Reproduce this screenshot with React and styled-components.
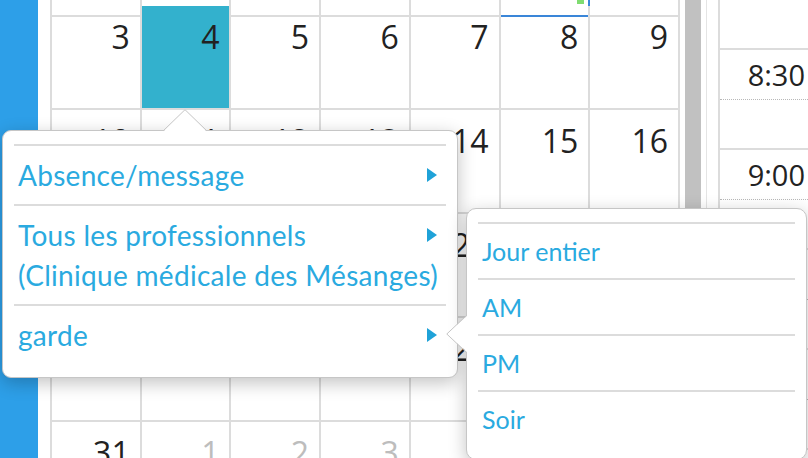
import React from "react";
import styled, { createGlobalStyle } from "styled-components";

const GlobalStyle = createGlobalStyle`
  html, body {
    margin: 0;
    padding: 0;
    background: #fff;
    overflow: hidden;
  }
  * {
    box-sizing: border-box;
  }
`;

const Page = styled.div`
  position: relative;
  display: flex;
  width: 808px;
  height: 458px;
  overflow: hidden;
  font-family: "Open Sans", "Noto Sans", sans-serif;
  color: #222;
`;

const Sidebar = styled.div`
  width: 38px;
  flex: none;
  background: #2d9fe8;
`;

const Gutter = styled.div`
  width: 12px;
  flex: none;
`;

const Month = styled.div`
  width: 630px;
  flex: none;
  display: grid;
  grid-template-columns: repeat(7, 1fr);
  grid-template-rows: 6px repeat(5, 104px);
  border-left: 2px solid #dcdcdc;
`;

const Day = styled.div`
  position: relative;
  border-right: 2px solid ${(p) => (p.$selected ? "#3a86d8" : "#dcdcdc")};
  border-bottom: 2px solid ${(p) => (p.$selected ? "#3a86d8" : "#dcdcdc")};
  background: ${(p) => (p.$today ? "#33b1cd" : "transparent")};
  padding: 15px 10px 0 0;
  text-align: right;
  font-size: 32px;
  line-height: 32px;
  color: ${(p) => (p.$muted ? "#bdbdbd" : "#222")};
`;

const Marker = styled.span`
  position: absolute;
  top: 0;
  right: 4px;
  width: 7px;
  height: 4px;
  background: #7fdc70;
`;

const ScrollGutter = styled.div`
  width: 38px;
  flex: none;
  display: flex;
`;

const Thumb = styled.div`
  width: 16px;
  margin-left: 5px;
  background: #c1c1c1;
`;

const ThumbEdge = styled.div`
  width: 1px;
  margin-left: 5px;
  background: #e4e4e4;
`;

const Hours = styled.div`
  flex: 1;
  display: flex;
  flex-direction: column;
  border-left: 2px solid #dcdcdc;
`;

const Slot = styled.div`
  height: 50px;
  flex: none;
  display: flex;
  align-items: center;
  justify-content: flex-end;
  padding-right: 3px;
  font-size: 29px;
  border-bottom: ${(p) => (p.$dotted ? "1px dotted #b8b8b8" : "2px solid #dcdcdc")};
`;

const Popover = styled.div`
  position: absolute;
  left: ${(p) => p.$left}px;
  top: ${(p) => p.$top}px;
  width: ${(p) => p.$width}px;
  background: #fff;
  border: 1px solid #c6c6c6;
  border-radius: ${(p) => p.$radius}px;
  box-shadow: 0 5px 18px rgba(0, 0, 0, 0.24);
  padding: 13px 11px;
  font-family: Lato, "Open Sans", sans-serif;
  color: #2aaae0;
`;

const Tip = styled.svg`
  position: absolute;
  left: ${(p) => p.$left}px;
  top: ${(p) => p.$top}px;
  overflow: visible;
`;

const Item = styled.div`
  border-top: 2px solid #dcdcdc;
  padding: ${(p) => (p.$small ? "10px 4px" : "9px 9px 9px 4px")};
  font-size: ${(p) => (p.$small ? 25 : 28)}px;
  line-height: ${(p) => (p.$small ? 34 : 40)}px;
  letter-spacing: ${(p) => (p.$small ? 0 : 0.3)}px;
  white-space: nowrap;

  &::after {
    content: "";
    display: block;
    clear: both;
  }
`;

const Caret = styled.svg`
  float: right;
  margin-top: 13px;
`;

const rows = [
  [3, 4, 5, 6, 7, 8, 9],
  [10, 11, 12, 13, 14, 15, 16],
  [17, 18, 19, 20, 21, 22, 23],
  [24, 25, 26, 27, 28, 29, 30],
  [31, 1, 2, 3, 4, 5, 6],
];

const slots = [
  { label: "" },
  { label: "8:30", dotted: true },
  { label: "" },
  { label: "9:00", dotted: true },
  { label: "" },
  { label: "9:30", dotted: true },
  { label: "" },
  { label: "10:00", dotted: true },
  { label: "" },
  { label: "10:30", dotted: true },
];

const mainMenu = [
  ["Absence/message"],
  ["Tous les professionnels", "(Clinique médicale des Mésanges)"],
  ["garde"],
];

const subMenu = ["Jour entier", "AM", "PM", "Soir"];

function CaretIcon() {
  return (
    <Caret width="10" height="14" viewBox="0 0 10 14">
      <polygon points="0,0 10,7 0,14" fill="#1fa2d8" />
    </Caret>
  );
}

export default function App() {
  return (
    <>
      <GlobalStyle />
      <Page>
        <Sidebar />
        <Gutter />
        <Month>
          {[0, 1, 2, 3, 4, 5, 6].map((i) => (
            <Day key={"top" + i} $selected={i === 5}>
              {i === 5 && <Marker />}
            </Day>
          ))}
          {rows.map((week, r) =>
            week.map((d, c) => (
              <Day
                key={r + "-" + c}
                $today={r === 0 && c === 1}
                $muted={r === 4 && c > 0}
              >
                {d}
              </Day>
            ))
          )}
        </Month>
        <ScrollGutter>
          <Thumb />
          <ThumbEdge />
        </ScrollGutter>
        <Hours>
          {slots.map((s, i) => (
            <Slot key={i} $dotted={s.dotted}>
              {s.label}
            </Slot>
          ))}
        </Hours>

        <Popover $left={2} $top={130} $width={456} $radius={9}>
          <Tip $left={160} $top={-22} width="44" height="23" viewBox="0 0 44 23">
            <polygon points="0,23 22,0.5 44,23" fill="#fff" />
            <polyline points="0,22 22,0.7 44,22" fill="none" stroke="#c6c6c6" strokeWidth="1" />
          </Tip>
          {mainMenu.map((lines, i) => (
            <Item key={i}>
              <CaretIcon />
              {lines.map((l) => (
                <div key={l}>{l}</div>
              ))}
            </Item>
          ))}
        </Popover>

        <Popover $left={466} $top={208} $width={341} $radius={10}>
          <Tip $left={-21} $top={106} width="22" height="38" viewBox="0 0 22 38">
            <polygon points="22,0 0.8,19 22,38" fill="#fff" />
            <polyline points="21,0 0.8,19 21,38" fill="none" stroke="#c6c6c6" strokeWidth="1" />
          </Tip>
          {subMenu.map((l) => (
            <Item key={l} $small>
              {l}
            </Item>
          ))}
        </Popover>
      </Page>
    </>
  );
}
